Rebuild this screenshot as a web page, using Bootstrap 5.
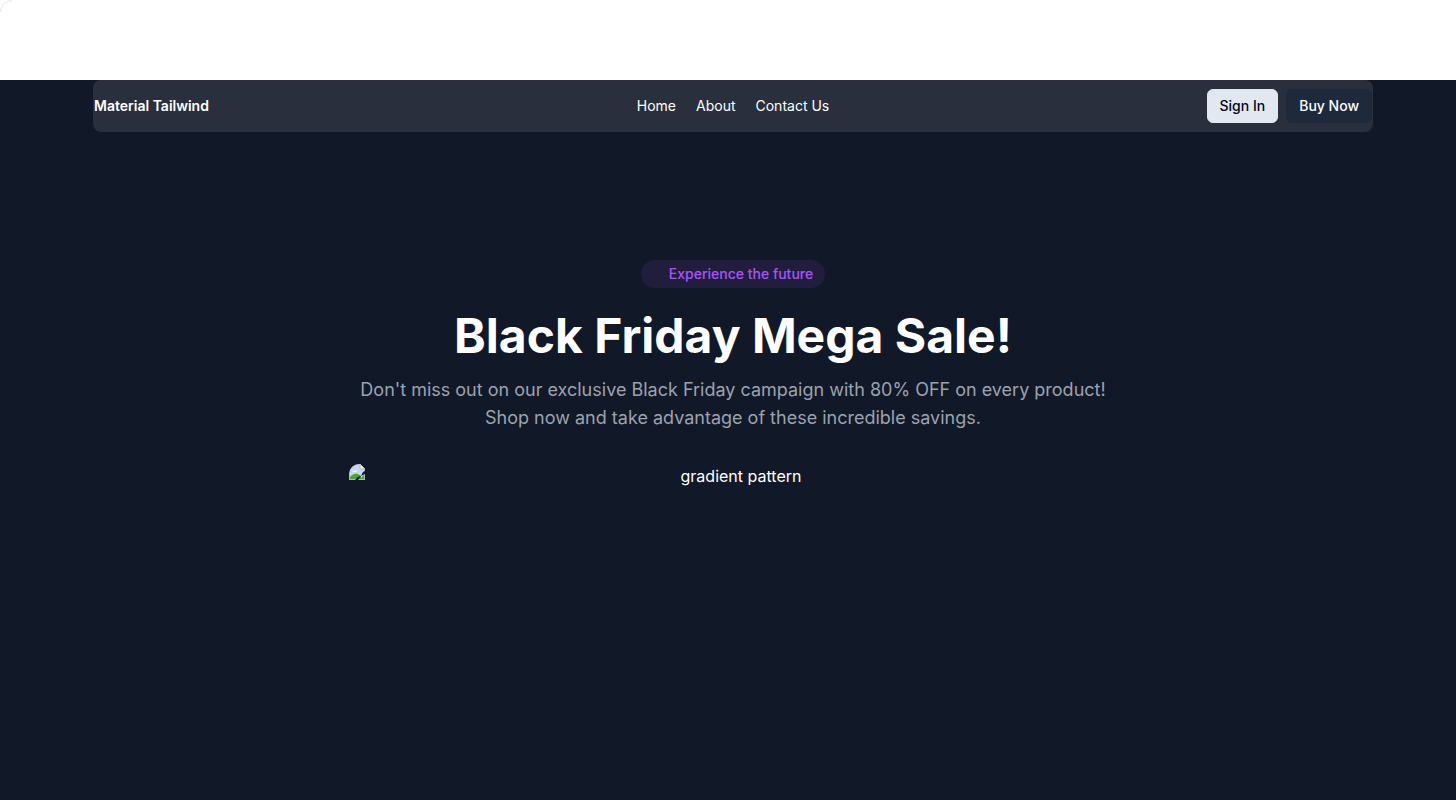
<!DOCTYPE html>
<html lang="en">
<head>
<meta charset="utf-8">
<meta name="viewport" content="width=device-width, initial-scale=1">
<title>Black Friday Mega Sale</title>
<link href="https://cdn.jsdelivr.net/npm/bootstrap@5.3.0/dist/css/bootstrap.min.css" rel="stylesheet">
<style>
body{font-family:Inter,sans-serif;background:#fff;color:#fff}
.top-frame{height:80px}
.hero{background:#111827;padding-left:10px;min-height:calc(100vh - 80px)}
.shell{max-width:1280px}
.site-nav{background:rgba(255,255,255,.1);border:1px solid transparent;border-radius:8px;height:52px}
.site-nav,.site-nav a,.site-nav .btn{font-size:14px;line-height:20px}
.side{flex:1 1 0}
.links{gap:20px}
.site-nav .btn{padding:6px 12px;border-radius:6px;font-weight:500}
.btn-sign{--bs-btn-color:#020617;--bs-btn-bg:#e2e8f0;--bs-btn-border-color:#e2e8f0}
.btn-buy{--bs-btn-color:#fff;--bs-btn-bg:#1e293b;--bs-btn-border-color:#1e293b}
.pitch{padding-top:128px}
.pill{background:rgba(168,85,247,.1);color:#a855f7;font-size:14px;line-height:20px;font-weight:500;padding:4px 12px 4px 28px;border-radius:14px}
h1{font-size:48px;line-height:48px;font-weight:700;margin:24px 0 16px}
.intro{font-size:18px;line-height:28px;color:#9ca3af;max-width:768px}
.pattern{max-width:768px;margin-top:32px;line-height:24px}
</style>
</head>
<body>
<div class="top-frame"><svg class="d-block" width="12" height="12" viewBox="0 0 12 12" fill="none" stroke="#e5e5e5" aria-hidden="true"><path d="M.5 12A11.5 11.5 0 0 1 12 .5"/></svg></div>
<main class="hero">
<div class="shell mx-auto">
<nav class="site-nav d-flex align-items-center">
<div class="side"><a href="#" class="text-white text-decoration-none fw-semibold">Material Tailwind</a></div>
<div class="links d-flex"><a href="#" class="text-white text-decoration-none">Home</a><a href="#" class="text-white text-decoration-none">About</a><a href="#" class="text-white text-decoration-none">Contact Us</a></div>
<div class="side d-flex justify-content-end gap-2"><button type="button" class="btn btn-sign">Sign In</button><button type="button" class="btn btn-buy">Buy Now</button></div>
</nav>
<section class="pitch d-flex flex-column align-items-center text-center">
<span class="pill">Experience the future</span>
<h1>Black Friday Mega Sale!</h1>
<p class="intro mb-0">Don't miss out on our exclusive Black Friday campaign with 80% OFF on every product! Shop now and take advantage of these incredible savings.</p>
<div class="pattern w-100 d-flex align-items-start">
<svg width="16" height="16" viewBox="0 0 16 16" aria-hidden="true"><path d="M0 16V10A10 10 0 0 1 10 0H11L16 5V16Z" fill="#c5d7f5"/><path d="M3 8q1-2 2-1 2-2 3 1Z" fill="#fff"/><path d="M1 15v-2q4-5 8-3l3 2v3Z" fill="#4aa52e"/><path d="M11 0v5h5Z" fill="#f5f5f5"/><path d="M0 15.500H16M11 0v5h5M.5 16v-6M15.500 5v11" fill="none" stroke="#b4b4b4"/><path d="M16 7v3l-4 2-3 4H6l3-3 3-1 2-4Z" fill="#111827"/><path d="M15 11v4h-4Z" fill="#4aa52e"/></svg>
<span class="flex-fill">gradient pattern</span>
</div>
</section>
</div>
</main>
<script src="https://cdn.jsdelivr.net/npm/bootstrap@5.3.0/dist/js/bootstrap.bundle.min.js"></script>
</body>
</html>
